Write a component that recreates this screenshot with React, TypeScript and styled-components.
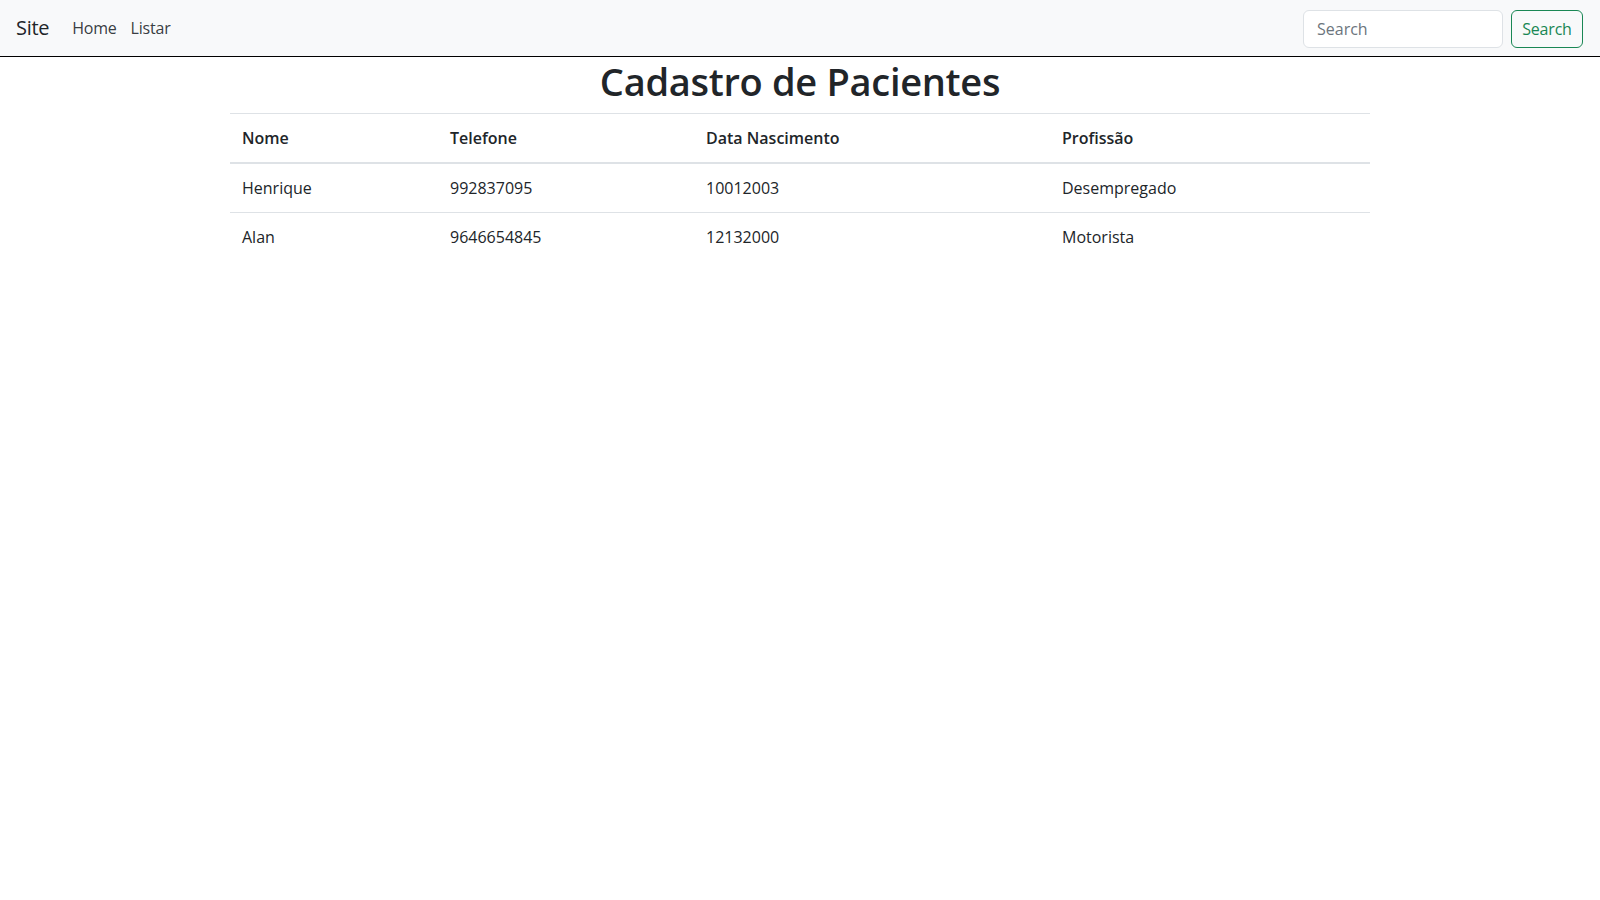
// Cadastro de Pacientes: navbar + tabela simples.
import styled, { createGlobalStyle } from 'styled-components'

interface Paciente {
  nome: string
  telefone: string
  nascimento: string
  profissao: string
}

const pacientes: Paciente[] = [
  { nome: 'Henrique', telefone: '992837095', nascimento: '10012003', profissao: 'Desempregado' },
  { nome: 'Alan', telefone: '9646654845', nascimento: '12132000', profissao: 'Motorista' },
]

const columns = [
  { key: 'nome', label: 'Nome', width: 208 },
  { key: 'telefone', label: 'Telefone', width: 256 },
  { key: 'nascimento', label: 'Data Nascimento', width: 356 },
  { key: 'profissao', label: 'Profissão', width: 320 },
] as const

export default function App() {
  return (
    <>
      <GlobalStyle />
      <Navbar>
        <NavLeft>
          <Brand href="#">Site</Brand>
          <NavLinks>
            <NavLink href="#">Home</NavLink>
            <NavLink href="#">Listar</NavLink>
          </NavLinks>
        </NavLeft>
        <SearchForm onSubmit={(e) => e.preventDefault()}>
          <SearchInput type="search" placeholder="Search" aria-label="Search" />
          <SearchButton type="submit">Search</SearchButton>
        </SearchForm>
      </Navbar>
      <Main>
        <Title>Cadastro de Pacientes</Title>
        <Table>
          <colgroup>
            {columns.map((c) => (
              <col key={c.key} style={{ width: `${c.width}px` }} />
            ))}
          </colgroup>
          <thead>
            <tr>
              {columns.map((c) => (
                <Th key={c.key}>{c.label}</Th>
              ))}
            </tr>
          </thead>
          <tbody>
            {pacientes.map((p, i) => (
              <tr key={p.nome}>
                {columns.map((c) => (
                  <Td key={c.key} last={i === pacientes.length - 1}>
                    {p[c.key]}
                  </Td>
                ))}
              </tr>
            ))}
          </tbody>
        </Table>
      </Main>
    </>
  )
}

const GlobalStyle = createGlobalStyle`
  * { box-sizing: border-box; }
  body {
    margin: 0;
    background: #fff;
    color: #212529;
    font-family: "Open Sans", "Noto Sans", "Liberation Sans", sans-serif;
    font-size: 16px;
    line-height: 1.5;
  }
`

const Navbar = styled.nav`
  height: 57px;
  display: flex;
  align-items: center;
  justify-content: space-between;
  padding: 0 17px 0 16px;
  background: #f8f9fa;
  border-bottom: 1px solid #000;
`

const NavLeft = styled.div`
  display: flex;
  align-items: center;
  gap: 23px;
`

const Brand = styled.a`
  font-size: 20px;
  color: #212529;
  text-decoration: none;
  line-height: 30px;
  letter-spacing: -0.3px;
`

const NavLinks = styled.div`
  display: flex;
  gap: 14px;
`

const NavLink = styled.a`
  color: rgba(33, 37, 41, 0.9);
  text-decoration: none;
  font-size: 16px;
  letter-spacing: -0.2px;
`

const SearchForm = styled.form`
  display: flex;
  gap: 8px;
  margin-top: 1px;
`

const SearchInput = styled.input`
  width: 200px;
  height: 38px;
  padding: 6px 13px;
  font: inherit;
  color: #212529;
  background: #fff;
  border: 1px solid #dee2e6;
  border-radius: 6px;
  outline: none;
  &::placeholder { color: #6c757d; }
`

const SearchButton = styled.button`
  width: 72px;
  height: 38px;
  padding: 0;
  font: inherit;
  letter-spacing: -0.2px;
  color: #198754;
  background: transparent;
  border: 1px solid #198754;
  border-radius: 6px;
  cursor: pointer;
`

const Main = styled.main`
  width: 1140px;
  margin: 0 auto;
`

const Title = styled.h1`
  margin: 0 0 8px;
  font-size: 38px;
  font-weight: 600;
  line-height: 48px;
  letter-spacing: -0.3px;
  text-align: center;
`

const Table = styled.table`
  width: 100%;
  border-collapse: collapse;
  table-layout: fixed;
  border-top: 1px solid #dee2e6;
`

const Th = styled.th`
  text-align: left;
  font-weight: 600;
  padding: 12px;
  border-bottom: 2px solid #dee2e6;
`

const Td = styled.td<{ last?: boolean }>`
  padding: 12px;
  border-bottom: ${(p) => (p.last ? 'none' : '1px solid #dee2e6')};
`
